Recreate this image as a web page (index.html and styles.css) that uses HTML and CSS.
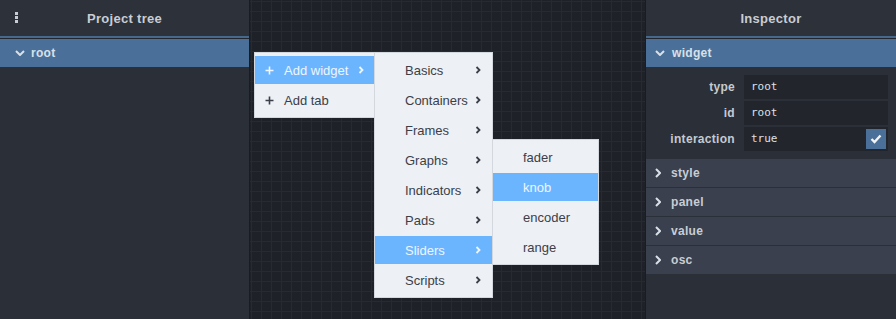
FILE: index.html
```html
<!DOCTYPE html>
<html lang="en">
<head>
  <meta charset="UTF-8">
  <meta name="viewport" content="width=device-width, initial-scale=1.0">
  <title>Editor</title>
  <link rel="stylesheet" href="styles.css">
</head>
<body>
  <div class="app">

    <!-- left: project tree -->
    <aside class="panel panel-left">
      <header class="panel-head">
        <svg class="kebab" width="3" height="11" viewBox="0 0 3 11">
          <rect x="0" y="0" width="3" height="3"/>
          <rect x="0" y="4" width="3" height="3"/>
          <rect x="0" y="8" width="3" height="3"/>
        </svg>
        <span>Project tree</span>
      </header>
      <div class="tree-row selected">
        <svg class="chev-down" width="10" height="6" viewBox="0 0 10 6"><polyline points="1,1 5,5 9,1"/></svg>
        <span>root</span>
      </div>
    </aside>

    <!-- middle: canvas with the context menu -->
    <main class="canvas">
      <ul class="menu menu-main">
        <li class="active">
          <svg class="plus" width="9" height="9" viewBox="0 0 9 9"><path d="M4.5 0.5v8M0.5 4.5h8"/></svg>
          <span class="label">Add widget</span>
          <svg class="arrow" width="6" height="8" viewBox="0 0 6 8"><polyline points="1.5,1 4.5,4 1.5,7"/></svg>
        </li>
        <li>
          <svg class="plus" width="9" height="9" viewBox="0 0 9 9"><path d="M4.5 0.5v8M0.5 4.5h8"/></svg>
          <span class="label">Add tab</span>
        </li>
      </ul>

      <ul class="menu menu-cats">
        <li><span class="icon"></span><span class="label">Basics</span><svg class="arrow" width="6" height="8" viewBox="0 0 6 8"><polyline points="1.5,1 4.5,4 1.5,7"/></svg></li>
        <li><span class="icon"></span><span class="label">Containers</span><svg class="arrow" width="6" height="8" viewBox="0 0 6 8"><polyline points="1.5,1 4.5,4 1.5,7"/></svg></li>
        <li><span class="icon"></span><span class="label">Frames</span><svg class="arrow" width="6" height="8" viewBox="0 0 6 8"><polyline points="1.5,1 4.5,4 1.5,7"/></svg></li>
        <li><span class="icon"></span><span class="label">Graphs</span><svg class="arrow" width="6" height="8" viewBox="0 0 6 8"><polyline points="1.5,1 4.5,4 1.5,7"/></svg></li>
        <li><span class="icon"></span><span class="label">Indicators</span><svg class="arrow" width="6" height="8" viewBox="0 0 6 8"><polyline points="1.5,1 4.5,4 1.5,7"/></svg></li>
        <li><span class="icon"></span><span class="label">Pads</span><svg class="arrow" width="6" height="8" viewBox="0 0 6 8"><polyline points="1.5,1 4.5,4 1.5,7"/></svg></li>
        <li class="active"><span class="icon"></span><span class="label">Sliders</span><svg class="arrow" width="6" height="8" viewBox="0 0 6 8"><polyline points="1.5,1 4.5,4 1.5,7"/></svg></li>
        <li><span class="icon"></span><span class="label">Scripts</span><svg class="arrow" width="6" height="8" viewBox="0 0 6 8"><polyline points="1.5,1 4.5,4 1.5,7"/></svg></li>
      </ul>

      <ul class="menu menu-widgets">
        <li><span class="icon"></span><span class="label">fader</span></li>
        <li class="active"><span class="icon"></span><span class="label">knob</span></li>
        <li><span class="icon"></span><span class="label">encoder</span></li>
        <li><span class="icon"></span><span class="label">range</span></li>
      </ul>
    </main>

    <!-- right: inspector -->
    <aside class="panel panel-right">
      <header class="panel-head">
        <span>Inspector</span>
      </header>

      <div class="section-head open">
        <svg class="chev-down" width="10" height="6" viewBox="0 0 10 6"><polyline points="1,1 5,5 9,1"/></svg>
        <span>widget</span>
      </div>
      <div class="props">
        <label>type</label>
        <div class="field">root</div>
        <label>id</label>
        <div class="field">root</div>
        <label>interaction</label>
        <div class="field">
          true
          <span class="check">
            <svg width="12" height="10" viewBox="0 0 12 10"><polyline points="1.5,5 4.5,8 10.5,1.5"/></svg>
          </span>
        </div>
      </div>

      <div class="section-head">
        <svg class="chev-right" width="6" height="10" viewBox="0 0 6 10"><polyline points="1,1 5,5 1,9"/></svg>
        <span>style</span>
      </div>
      <div class="section-head">
        <svg class="chev-right" width="6" height="10" viewBox="0 0 6 10"><polyline points="1,1 5,5 1,9"/></svg>
        <span>panel</span>
      </div>
      <div class="section-head">
        <svg class="chev-right" width="6" height="10" viewBox="0 0 6 10"><polyline points="1,1 5,5 1,9"/></svg>
        <span>value</span>
      </div>
      <div class="section-head">
        <svg class="chev-right" width="6" height="10" viewBox="0 0 6 10"><polyline points="1,1 5,5 1,9"/></svg>
        <span>osc</span>
      </div>
    </aside>

  </div>
</body>
</html>
```

FILE: styles.css
```css
* {
  box-sizing: border-box;
}
html, body {
  margin: 0;
  padding: 0;
  height: 100%;
}
body {
  font-family: "Liberation Sans", Arial, sans-serif;
  background: #1f2128;
  overflow: hidden;
}
.app {
  display: flex;
  height: 319px;
}

/* panels */
.panel {
  background: #2b2f37;
  display: flex;
  flex-direction: column;
}
.panel-left {
  width: 250px;
  border-right: 1px solid #1a1c21;
}
.panel-right {
  width: 251px;
  border-left: 1px solid #1a1c21;
}
.panel-head {
  position: relative;
  height: 39px;
  display: flex;
  align-items: center;
  justify-content: center;
  padding-bottom: 3px;
  /* header, blue rule, dark gap */
  background-image: linear-gradient(to bottom, #2d3139 0, #2d3139 36px, #46688d 36px, #46688d 38px, #23262c 38px);
  color: #c8cdd5;
  font-weight: bold;
  font-size: 13px;
  letter-spacing: 0.3px;
}
.kebab {
  position: absolute;
  left: 15px;
  top: 12px;
  fill: #c8cdd5;
}

.tree-row,
.section-head {
  height: 28px;
  display: flex;
  align-items: center;
  font-weight: bold;
  font-size: 12px;
  letter-spacing: 0.3px;
}
.tree-row {
  padding-left: 15px;
  gap: 6px;
}
.selected,
.section-head.open {
  background: #4a7099;
  color: #d9e0e8;
}
.tree-row svg,
.section-head svg {
  fill: none;
  stroke: #d9e0e8;
  stroke-width: 2;
}
.tree-row span {
  margin-top: -1px;
}

/* canvas */
.canvas {
  position: relative;
  flex: 1;
  background-color: #1f2128;
  background-image:
    linear-gradient(to right, #272a31 1px, transparent 1px),
    linear-gradient(to bottom, #272a31 1px, transparent 1px);
  background-size: 10px 10px;
  background-position: 1px 1px;
}

/* context menu */
.menu {
  position: absolute;
  display: flex;
  flex-direction: column;
  margin: 0;
  padding: 2px 0;
  list-style: none;
  background: #edf0f5;
  border: 1px solid #d3d7de;
  font-size: 13px;
  color: #3b3f48;
}
.menu li {
  display: flex;
  align-items: center;
  height: 28px;
  margin: 1px 0;
  padding: 0 10px;
}
.menu li.active {
  background: #6bb5ff;
  color: #eef6ff;
}
.menu .icon {
  width: 20px;
  flex: none;
}
.menu .plus {
  flex: none;
  margin-right: 10px;
  margin-left: 0;
  stroke: #3b3f48;
  stroke-width: 1.6;
}
.menu li.active .plus {
  stroke: #eef6ff;
}
.menu .label {
  flex: 1;
}
.menu .arrow {
  fill: none;
  stroke: #3b3f48;
  stroke-width: 1.8;
}
.menu li.active .arrow {
  stroke: #eef6ff;
}
.menu-main {
  left: 4px;
  top: 52px;
  width: 121px;
  z-index: 1;
}
.menu-cats {
  left: 124px;
  top: 52px;
  width: 119px;
  z-index: 2;
}
.menu-cats .arrow {
  margin-right: 1px;
}
.menu-widgets {
  left: 242px;
  top: 139px;
  width: 107px;
  z-index: 3;
}

/* inspector */
.props {
  display: grid;
  grid-template-columns: 81px 1fr;
  column-gap: 9px;
  row-gap: 2px;
  padding: 8px;
}
.props label {
  text-align: right;
  align-self: center;
  font-weight: bold;
  font-size: 12px;
  letter-spacing: 0.3px;
  color: #c5cad2;
}
.field {
  position: relative;
  height: 24px;
  background: #22252b;
  color: #dde1e7;
  font-family: "DejaVu Sans Mono", monospace;
  font-size: 11px;
  line-height: 24px;
  padding-left: 7px;
}
.check {
  position: absolute;
  right: 2px;
  top: 2px;
  width: 20px;
  height: 20px;
  background: #4a7099;
  display: flex;
  align-items: center;
  justify-content: center;
}
.check svg {
  fill: none;
  stroke: #f2f5f8;
  stroke-width: 2.4;
}

.section-head {
  background: #3a404e;
  color: #c8cdd5;
  padding-left: 9px;
  gap: 10px;
  border-bottom: 1px solid #2b2f37;
  height: 29px;
}
.section-head.open {
  height: 28px;
  border-bottom: 0;
  gap: 6px;
}
.section-head.open span {
  margin-left: 1px;
}
```
